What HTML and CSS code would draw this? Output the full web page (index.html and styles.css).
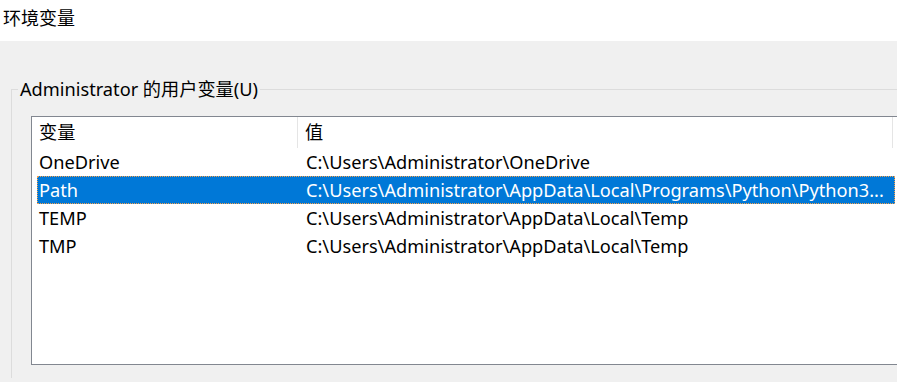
FILE: index.html
```html
<!DOCTYPE html>
<html lang="zh-CN">
<head>
    <meta charset="UTF-8">
    <title>环境变量</title>
    <link rel="stylesheet" href="styles.css">
</head>
<body>
    <!-- 标题栏 -->
    <div class="titlebar">环境变量</div>

    <div class="panel">
        <fieldset class="group">
            <legend>Administrator 的用户变量(U)</legend>

            <!-- 变量列表 -->
            <div class="listview">
                <div class="header">
                    <div class="col-name">变量</div>
                    <div class="col-value">值</div>
                </div>
                <div class="row">
                    <div class="cell-name">OneDrive</div>
                    <div class="cell-value">C:\Users\Administrator\OneDrive</div>
                </div>
                <div class="row selected">
                    <div class="cell-name">Path</div>
                    <div class="cell-value">C:\Users\Administrator\AppData\Local\Programs\Python\Python3...</div>
                </div>
                <div class="row">
                    <div class="cell-name">TEMP</div>
                    <div class="cell-value">C:\Users\Administrator\AppData\Local\Temp</div>
                </div>
                <div class="row">
                    <div class="cell-name">TMP</div>
                    <div class="cell-value">C:\Users\Administrator\AppData\Local\Temp</div>
                </div>
            </div>
        </fieldset>
    </div>
</body>
</html>
```

FILE: styles.css
```css
html, body {
    margin: 0;
    height: 382px;
    overflow: hidden;
}
body {
    font-family: "Noto Sans", "Noto Sans CJK SC", sans-serif;
    font-size: 18px;
    color: #000;
    background-color: #f0f0f0;
}
.titlebar {
    height: 41px;
    box-sizing: border-box;
    padding: 6px 0 0 3px;
    line-height: 24px;
    background-color: #fff;
}
.panel {
    padding: 36px 0 0 11px;
}
.group {
    margin: 0;
    min-height: 300px;
    padding: 0 0 0 19px;
    border: 1px solid #dcdcdc;
    border-right: none;
    border-bottom: none;
    font-size: 18.2px;
}
.group legend {
    margin-left: -13px;
    padding: 0 2px;
    line-height: 24px;
}
.listview {
    margin-top: 15px;
    width: 880px;
    height: 249px;
    box-sizing: border-box;
    border: 1px solid #828790;
    background-color: #fff;
}
.header {
    display: flex;
    height: 31px;
    line-height: 31px;
}
.col-name {
    width: 266px;
    padding-left: 7px;
    box-sizing: border-box;
    border-right: 1px solid #e5e5e5;
}
.col-value {
    width: 595px;
    padding-left: 7px;
    box-sizing: border-box;
    border-right: 1px solid #e5e5e5;
}
.row {
    display: grid;
    grid-template-columns: 262px 1fr;
    width: 858px;
    height: 28px;
    box-sizing: border-box;
    padding-top: 1px;
    margin-left: 5px;
    line-height: 27px;
    white-space: nowrap;
    overflow: hidden;
}
.cell-name {
    padding-left: 2px;
}
.cell-value {
    padding-left: 7px;
}
.selected {
    background-color: #0078d7;
    color: #fff;
    outline: 1px dotted #f5a04a;
    outline-offset: -1px;
}
```
